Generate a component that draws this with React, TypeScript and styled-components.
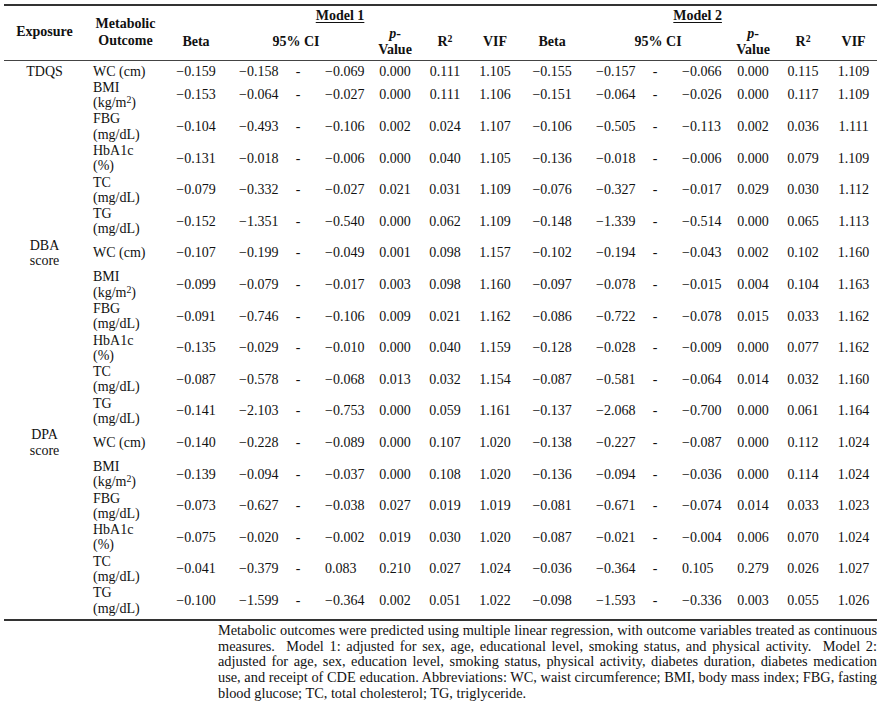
import React from 'react';
import styled, { createGlobalStyle } from 'styled-components';

const GlobalStyle = createGlobalStyle`
  body {
    margin: 0;
    background: #fff;
  }
`;

const Page = styled.div`
  width: 884px;
  box-sizing: border-box;
  padding: 4px 7px 0 4px;
  font-family: 'Liberation Serif', 'Times New Roman', serif;
  color: #111;
`;

const Table = styled.table`
  width: 873px;
  table-layout: fixed;
  border-collapse: collapse;
  font-size: 14px;
  line-height: 15.3px;
  border-top: 2px solid #333;
  border-bottom: 2px solid #333;

  sup {
    font-size: 0.7em;
    line-height: 0;
    vertical-align: 0.45em;
  }
`;

const Col = styled.col<{ $w: number }>`
  width: ${(p) => p.$w}px;
`;

const Head = styled.thead`
  border-bottom: 1px solid #444;
  line-height: 16.5px;
`;

const HeadCell = styled.th<{ $align?: string; $pl?: number; $pr?: number; $top?: boolean }>`
  font-weight: 700;
  text-align: ${(p) => p.$align || 'center'};
  vertical-align: middle;
  padding: ${(p) => (p.$top ? '2px' : '0.5px')} ${(p) => p.$pr || 0}px
    ${(p) => (p.$top ? '0.5px' : '1px')} ${(p) => p.$pl || 0}px;
  white-space: nowrap;
`;

const ModelLabel = styled.span`
  text-decoration: underline;
  text-decoration-thickness: 1px;
  text-underline-offset: 2px;
`;

const Body = styled.tbody`
  tr:first-child td {
    padding-top: 3px;
  }
  tr:last-child td {
    padding-bottom: 3px;
  }
`;

const Cell = styled.td<{ $align?: string; $pl?: number }>`
  text-align: ${(p) => p.$align || 'center'};
  vertical-align: middle;
  padding: 0.5px 0 0.5px ${(p) => p.$pl || 0}px;
  white-space: nowrap;
`;

const Note = styled.div`
  width: 659px;
  margin-left: 214px;
  padding-top: 2px;
  font-size: 14.35px;
  line-height: 15.7px;
`;

const NoteLine = styled.span<{ $last?: boolean }>`
  display: block;
  text-align: ${(p) => (p.$last ? 'left' : 'justify')};
  text-align-last: ${(p) => (p.$last ? 'left' : 'justify')};
`;

const colWidths = [81, 87, 48, 70, 16, 66, 46, 54, 46, 68, 60, 18, 66, 46, 54, 47];

// per model: beta, ci low, dash, ci high, p, R2, VIF
const modelCols = [
  [{ align: 'center' }, { align: 'left', pl: 19 }, { align: 'center' }, { align: 'left', pl: 19 }, { align: 'center' }, { align: 'center' }, { align: 'center' }],
  [{ align: 'center' }, { align: 'left', pl: 10 }, { align: 'center' }, { align: 'left', pl: 18 }, { align: 'center' }, { align: 'center' }, { align: 'center' }],
];

const outcomes: React.ReactNode[] = [
  <>WC (cm)</>,
  <>BMI<br />(kg/m<sup>2</sup>)</>,
  <>FBG<br />(mg/dL)</>,
  <>HbA1c<br />(%)</>,
  <>TC<br />(mg/dL)</>,
  <>TG<br />(mg/dL)</>,
];

type Row = [number[], number[]];

const groups: { exposure: React.ReactNode; rows: Row[] }[] = [
  {
    exposure: 'TDQS',
    rows: [
      [[-0.159, -0.158, -0.069, 0.0, 0.111, 1.105], [-0.155, -0.157, -0.066, 0.0, 0.115, 1.109]],
      [[-0.153, -0.064, -0.027, 0.0, 0.111, 1.106], [-0.151, -0.064, -0.026, 0.0, 0.117, 1.109]],
      [[-0.104, -0.493, -0.106, 0.002, 0.024, 1.107], [-0.106, -0.505, -0.113, 0.002, 0.036, 1.111]],
      [[-0.131, -0.018, -0.006, 0.0, 0.04, 1.105], [-0.136, -0.018, -0.006, 0.0, 0.079, 1.109]],
      [[-0.079, -0.332, -0.027, 0.021, 0.031, 1.109], [-0.076, -0.327, -0.017, 0.029, 0.03, 1.112]],
      [[-0.152, -1.351, -0.54, 0.0, 0.062, 1.109], [-0.148, -1.339, -0.514, 0.0, 0.065, 1.113]],
    ],
  },
  {
    exposure: <>DBA<br />score</>,
    rows: [
      [[-0.107, -0.199, -0.049, 0.001, 0.098, 1.157], [-0.102, -0.194, -0.043, 0.002, 0.102, 1.16]],
      [[-0.099, -0.079, -0.017, 0.003, 0.098, 1.16], [-0.097, -0.078, -0.015, 0.004, 0.104, 1.163]],
      [[-0.091, -0.746, -0.106, 0.009, 0.021, 1.162], [-0.086, -0.722, -0.078, 0.015, 0.033, 1.162]],
      [[-0.135, -0.029, -0.01, 0.0, 0.04, 1.159], [-0.128, -0.028, -0.009, 0.0, 0.077, 1.162]],
      [[-0.087, -0.578, -0.068, 0.013, 0.032, 1.154], [-0.087, -0.581, -0.064, 0.014, 0.032, 1.16]],
      [[-0.141, -2.103, -0.753, 0.0, 0.059, 1.161], [-0.137, -2.068, -0.7, 0.0, 0.061, 1.164]],
    ],
  },
  {
    exposure: <>DPA<br />score</>,
    rows: [
      [[-0.14, -0.228, -0.089, 0.0, 0.107, 1.02], [-0.138, -0.227, -0.087, 0.0, 0.112, 1.024]],
      [[-0.139, -0.094, -0.037, 0.0, 0.108, 1.02], [-0.136, -0.094, -0.036, 0.0, 0.114, 1.024]],
      [[-0.073, -0.627, -0.038, 0.027, 0.019, 1.019], [-0.081, -0.671, -0.074, 0.014, 0.033, 1.023]],
      [[-0.075, -0.02, -0.002, 0.019, 0.03, 1.02], [-0.087, -0.021, -0.004, 0.006, 0.07, 1.024]],
      [[-0.041, -0.379, 0.083, 0.21, 0.027, 1.024], [-0.036, -0.364, 0.105, 0.279, 0.026, 1.027]],
      [[-0.1, -1.599, -0.364, 0.002, 0.051, 1.022], [-0.098, -1.593, -0.336, 0.003, 0.055, 1.026]],
    ],
  },
];

const fmt = (v: number) => (v < 0 ? '\u2212' : '') + Math.abs(v).toFixed(3);

const modelCells = (values: number[], m: number) => {
  const [beta, lo, hi, p, r2, vif] = values;
  const texts = [fmt(beta), fmt(lo), '-', fmt(hi), fmt(p), fmt(r2), fmt(vif)];
  return texts.map((t, i) => (
    <Cell key={`${m}-${i}`} $align={modelCols[m][i].align} $pl={modelCols[m][i].pl}>
      {t}
    </Cell>
  ));
};

const noteLines = [
  'Metabolic outcomes were predicted using multiple linear regression, with outcome variables treated as continuous',
  'measures.\u00a0 Model 1: adjusted for sex, age, educational level, smoking status, and physical activity.\u00a0 Model 2:',
  'adjusted for age, sex, education level, smoking status, physical activity, diabetes duration, diabetes medication',
  'use, and receipt of CDE education. Abbreviations: WC, waist circumference; BMI, body mass index; FBG, fasting',
  'blood glucose; TC, total cholesterol; TG, triglyceride.',
];

const ModelHeads = () => (
  <>
    <HeadCell>Beta</HeadCell>
    <HeadCell colSpan={3}>95% CI</HeadCell>
    <HeadCell>
      <i>p</i>-<br />Value
    </HeadCell>
    <HeadCell>
      R<sup>2</sup>
    </HeadCell>
    <HeadCell>VIF</HeadCell>
  </>
);

export default function App() {
  return (
    <Page>
      <GlobalStyle />
      <Table>
        <colgroup>
          {colWidths.map((w, i) => (
            <Col key={i} $w={w} />
          ))}
        </colgroup>
        <Head>
          <tr>
            <HeadCell rowSpan={2}>Exposure</HeadCell>
            <HeadCell rowSpan={2} $pl={8} $pr={14}>
              Metabolic
              <br />
              Outcome
            </HeadCell>
            <HeadCell colSpan={7} $top $pr={10}>
              <ModelLabel>Model 1</ModelLabel>
            </HeadCell>
            <HeadCell colSpan={7} $top>
              <ModelLabel>Model 2</ModelLabel>
            </HeadCell>
          </tr>
          <tr>
            <ModelHeads />
            <ModelHeads />
          </tr>
        </Head>
        <Body>
          {groups.map((g, gi) =>
            g.rows.map((row, ri) => (
              <tr key={`${gi}-${ri}`}>
                <Cell>{ri === 0 ? g.exposure : null}</Cell>
                <Cell $align="left" $pl={8}>
                  {outcomes[ri]}
                </Cell>
                {modelCells(row[0], 0)}
                {modelCells(row[1], 1)}
              </tr>
            ))
          )}
        </Body>
      </Table>
      <Note>
        {noteLines.map((l, i) => (
          <NoteLine key={i} $last={i === noteLines.length - 1}>
            {l}
          </NoteLine>
        ))}
      </Note>
    </Page>
  );
}
